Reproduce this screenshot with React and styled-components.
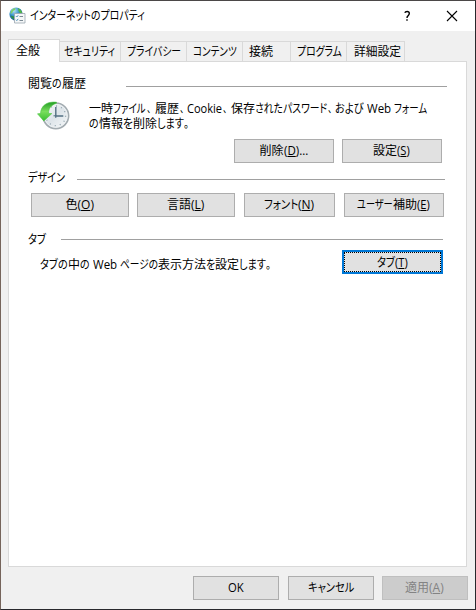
import React, { useLayoutEffect, useRef } from "react";
import styled, { createGlobalStyle } from "styled-components";

const GlobalStyle = createGlobalStyle`
  * {
    box-sizing: border-box;
  }
  body {
    margin: 0;
    font-family: "Open Sans", "Noto Sans CJK JP", sans-serif;
    font-size: 12px;
    line-height: 15px;
    color: #000;
  }
`;

const Dialog = styled.div`
  width: 476px;
  height: 610px;
  display: flex;
  flex-direction: column;
  background: #f0f0f0;
  border: 1px solid;
  border-color: #4b4747 #28282c #28282c #75645b;
`;
const TitleBar = styled.header`
  height: 30px;
  flex: none;
  display: flex;
  align-items: center;
  background: #fff;
  padding: 0 16px 1px 8px;
`;
const Title = styled.div`
  flex: 1;
  display: flex;
  padding-left: 4px;
`;
const TabList = styled.nav`
  display: flex;
  align-items: flex-end;
  height: 30px;
  flex: none;
  padding-left: 7px;
`;
const Tab = styled.div`
  display: flex;
  align-items: center;
  width: ${(p) => p.$width}px;
  height: ${(p) => (p.$active ? 23 : 20)}px;
  padding-left: ${(p) => p.$pad}px;
  padding-bottom: ${(p) => (p.$active ? 1 : 0)}px;
  margin-bottom: ${(p) => (p.$active ? -1 : 0)}px;
  background: ${(p) => (p.$active ? "#fff" : "#f0f0f0")};
  border: 1px solid #d9d9d9;
  border-bottom: none;
  border-left-width: ${(p) => (p.$active ? 1 : 0)}px;
  z-index: ${(p) => (p.$active ? 1 : 0)};
`;
const Panel = styled.main`
  width: 459px;
  height: 506px;
  flex: none;
  margin-left: 7px;
  padding: 14px 0 0 19px;
  background: #fff;
  border: 1px solid #d9d9d9;
`;
const Heading = styled.div`
  display: flex;
  height: 15px;
  width: ${(p) => p.$width}px;
  margin-top: ${(p) => p.$top || 0}px;
`;
const Rule = styled.div`
  flex: 1;
  height: 1px;
  margin: ${(p) => p.$drop}px 0 0 ${(p) => p.$gap}px;
  background: #a0a0a0;
`;
const History = styled.div`
  display: flex;
  height: 48px;
  padding: 10px 0 0 9px;
`;
const Message = styled.div`
  margin-left: 19px;
`;
const Line = styled.div`
  display: flex;
  height: 15px;
`;
const ButtonRow = styled.div`
  display: flex;
  gap: 8px;
  margin: ${(p) => p.$top}px 0 0 ${(p) => p.$left}px;
`;
const Button = styled.button`
  display: flex;
  align-items: center;
  justify-content: center;
  width: ${(p) => p.$width}px;
  height: 24px;
  margin: 0 0 0 ${(p) => p.$shift || 0}px;
  padding: 0 1px 1px 0;
  font: inherit;
  color: #000;
  background: #e1e1e1;
  border: 1px solid #adadad;
  &:disabled {
    color: #838383;
    background: #ccc;
    border-color: #bfbfbf;
  }
`;
const FocusButton = styled(Button)`
  border: 2px solid #0078d7;
  padding: 0;
`;
const FocusRing = styled.span`
  flex: 1;
  height: 20px;
  display: flex;
  align-items: center;
  justify-content: center;
  padding: 0 1px 0 0;
  border: 1px dotted #000;
`;
const TabSetting = styled.div`
  display: flex;
  margin-top: 3px;
  padding-left: 12px;
`;
const TabMessage = styled.div`
  display: flex;
  width: 302px;
  padding-top: 7px;
`;
const Footer = styled.footer`
  display: flex;
  justify-content: flex-end;
  gap: 8px;
  padding: 9px 7px 0 0;
`;
const RunBox = styled.span`
  display: inline-block;
  flex: none;
  width: ${(p) => p.$width}px;
  height: 15px;
  margin-left: ${(p) => p.$gap || 0}px;
  text-align: left;
`;
const RunText = styled.span`
  display: inline-block;
  white-space: nowrap;
  transform-origin: 0 50%;
  font-feature-settings: "palt";
  u {
    text-underline-offset: 1px;
    text-decoration-skip-ink: none;
  }
`;

// squeezes a run of kana or latin text to the given width
function Run({ w, gap, children }) {
  const ref = useRef(null);
  useLayoutEffect(() => {
    const el = ref.current;
    const fit = () => {
      el.style.transform = `scaleX(${w / el.offsetWidth})`;
    };
    fit();
    document.fonts.ready.then(fit);
  }, [w]);
  return (
    <RunBox $width={w} $gap={gap}>
      <RunText ref={ref}>{children}</RunText>
    </RunBox>
  );
}

function GlobeIcon() {
  return (
    <svg width="17" height="17" viewBox="0 0 17 17">
      <defs>
        <radialGradient id="globe" cx="0.35" cy="0.25" r="0.8">
          <stop offset="0" stopColor="#b5e3f5" />
          <stop offset="0.5" stopColor="#348fc8" />
          <stop offset="1" stopColor="#174a8d" />
        </radialGradient>
      </defs>
      <circle cx="7" cy="7" r="6.6" fill="url(#globe)" />
      <path d="M2 4Q4 1.2 6.5 1L6 3 4 4 3 6 1.5 7Z" fill="#7ccf62" />
      <path d="M9 1Q12.5 2.5 13.3 6L11 6 9.5 4Z" fill="#4fb544" />
      <path d="M1.5 8.5l3.5 1v3Q2.5 11.5 1.5 8.5Z" fill="#2f8f45" />
      <path d="M5.5 6.5h10.5v9.5h-10.5z" fill="#f5f7f8" stroke="#9aa6af" strokeWidth=".8" />
      <path d="M7 9.2l.8.8 1.4-1.7M7 12.8l.8.8 1.4-1.7" fill="none" stroke="#3d87b0" strokeWidth=".9" />
      <path d="M10.5 9.5h3.5M10.5 13.5h3.5" stroke="#7d8b95" />
    </svg>
  );
}

function HistoryIcon() {
  return (
    <svg width="33" height="30" viewBox="0 0 33 30">
      <defs>
        <linearGradient id="face" x1="0" y1="0" x2="1" y2="1">
          <stop offset="0" stopColor="#fff" />
          <stop offset="0.5" stopColor="#dde4e9" />
          <stop offset="1" stopColor="#f8fafb" />
        </linearGradient>
        <linearGradient id="arrow" x1="0" y1="0" x2="0" y2="1">
          <stop offset="0" stopColor="#249d27" />
          <stop offset="0.5" stopColor="#79de5c" />
          <stop offset="1" stopColor="#38bd31" />
        </linearGradient>
      </defs>
      <circle cx="18.8" cy="14.8" r="12.8" fill="url(#face)" stroke="#a3acb1" strokeWidth="1.7" />
      <circle cx="18.8" cy="14.8" r="11.5" fill="none" stroke="#eef1f3" />
      <circle cx="18.8" cy="14.8" r="9.8" fill="none" stroke="#8c9fa9" strokeWidth="1.3" strokeDasharray="1 4.13" />
      <path d="M18.8 6v9h7.5" fill="none" stroke="#526f82" strokeWidth="1.4" />
      <path d="M16.5 14.8h2.3v2.2" fill="none" stroke="#526f82" />
      <path
        d="M19.5 1.2C10 .3 4 4.5 3.5 12.5L.5 12.8 6.8 20 14.8 12.6 11.5 12.4C11.5 7.5 14 4 19.5 2.2Z"
        fill="url(#arrow)"
        stroke="#4bc441"
        strokeWidth=".6"
      />
    </svg>
  );
}

const tabs = [
  { label: "全般", width: 52, pad: 7, text: 24, active: true },
  { label: "セキュリティ", width: 61, pad: 4, text: 51 },
  { label: "プライバシー", width: 66, pad: 6, text: 54 },
  { label: "コンテンツ", width: 56, pad: 6, text: 44 },
  { label: "接続", width: 48, pad: 6, text: 24 },
  { label: "プログラム", width: 56, pad: 6, text: 45 },
  { label: "詳細設定", width: 58, pad: 7, text: 47 },
];

export default function App() {
  return (
    <>
      <GlobalStyle />
      <Dialog>
        <TitleBar>
          <GlobeIcon />
          <Title>
            <Run w={115}>インターネットのプロパティ</Run>
          </Title>
          <svg width="56" height="12" viewBox="0 0 56 12">
            <path
              d="M1.8 2.8Q2.3 1.5 4.1 1.5 6.3 1.5 6.3 3.6 6.3 4.7 5.2 5.6 4 6.5 4 8M4 9.3v1.4"
              fill="none"
              stroke="#000"
              strokeWidth="1.4"
            />
            <path d="M44 1l10 10M54 1l-10 10" stroke="#000" strokeWidth="1.1" />
          </svg>
        </TitleBar>
        <TabList>
          {tabs.map((t) => (
            <Tab key={t.label} $width={t.width} $pad={t.pad} $active={t.active}>
              <Run w={t.text}>{t.label}</Run>
            </Tab>
          ))}
        </TabList>
        <Panel>
          <Heading $width={419}>
            <Run w={24}>閲覧</Run>
            <Run w={10}>の</Run>
            <Run w={24}>履歴</Run>
            <Rule $drop={10} $gap={40} />
          </Heading>
          <History>
            <HistoryIcon />
            <Message>
              <Line>
                <Run w={24}>一時</Run>
                <Run w={33}>ファイル</Run>
                <Run w={4} gap={1}>、</Run>
                <Run w={24} gap={4}>履歴</Run>
                <Run w={4} gap={1}>、</Run>
                <Run w={35} gap={3}>Cookie</Run>
                <Run w={4} gap={1}>、</Run>
                <Run w={24} gap={4}>保存</Run>
                <Run w={72}>されたパスワード</Run>
                <Run w={4} gap={1}>、</Run>
                <Run w={29} gap={3}>および</Run>
                <Run w={24} gap={3}>Web</Run>
                <Run w={33} gap={3}>フォーム</Run>
              </Line>
              <Line>
                <Run w={10}>の</Run>
                <Run w={24}>情報</Run>
                <Run w={10}>を</Run>
                <Run w={24}>削除</Run>
                <Run w={27}>します</Run>
                <Run w={5}>。</Run>
              </Line>
            </Message>
          </History>
          <ButtonRow $top={0} $left={206}>
            <Button $width={100}>
              <Run w={24}>削除</Run>
              <Run w={24}>(<u>D</u>)...</Run>
            </Button>
            <Button $width={100}>
              <Run w={24}>設定</Run>
              <Run w={13}>(<u>S</u>)</Run>
            </Button>
          </ButtonRow>
          <Heading $width={417} $top={7}>
            <Run w={37}>デザイン</Run>
            <Rule $drop={9} $gap={12} />
          </Heading>
          <ButtonRow $top={8} $left={3}>
            <Button $width={98}>
              <Run w={12}>色</Run>
              <Run w={16}>(<u>O</u>)</Run>
            </Button>
            <Button $width={98}>
              <Run w={24}>言語</Run>
              <Run w={13}>(<u>L</u>)</Run>
            </Button>
            <Button $width={91} $shift={1}>
              <Run w={34}>フォント</Run>
              <Run w={16}>(<u>N</u>)</Run>
            </Button>
            <Button $width={100} $shift={1}>
              <Run w={36}>ユーザー</Run>
              <Run w={24}>補助</Run>
              <Run w={13}>(<u>E</u>)</Run>
            </Button>
          </ButtonRow>
          <Heading $width={415} $top={15}>
            <Run w={18}>タブ</Run>
            <Rule $drop={7} $gap={15} />
          </Heading>
          <TabSetting>
            <TabMessage>
              <Run w={28}>タブの</Run>
              <Run w={12}>中</Run>
              <Run w={10}>の</Run>
              <Run w={24} gap={3}>Web</Run>
              <Run w={38} gap={3}>ページの</Run>
              <Run w={48}>表示方法</Run>
              <Run w={9}>を</Run>
              <Run w={24}>設定</Run>
              <Run w={27}>します</Run>
              <Run w={5}>。</Run>
            </TabMessage>
            <FocusButton $width={101}>
              <FocusRing>
                <Run w={18}>タブ</Run>
                <Run w={13}>(<u>T</u>)</Run>
              </FocusRing>
            </FocusButton>
          </TabSetting>
        </Panel>
        <Footer>
          <Button $width={86}>
            <Run w={16}>OK</Run>
          </Button>
          <Button $width={86} $shift={1}>
            <Run w={46}>キャンセル</Run>
          </Button>
          <Button $width={86} disabled>
            <Run w={24}>適用</Run>
            <Run w={15}>(<u>A</u>)</Run>
          </Button>
        </Footer>
      </Dialog>
    </>
  );
}
